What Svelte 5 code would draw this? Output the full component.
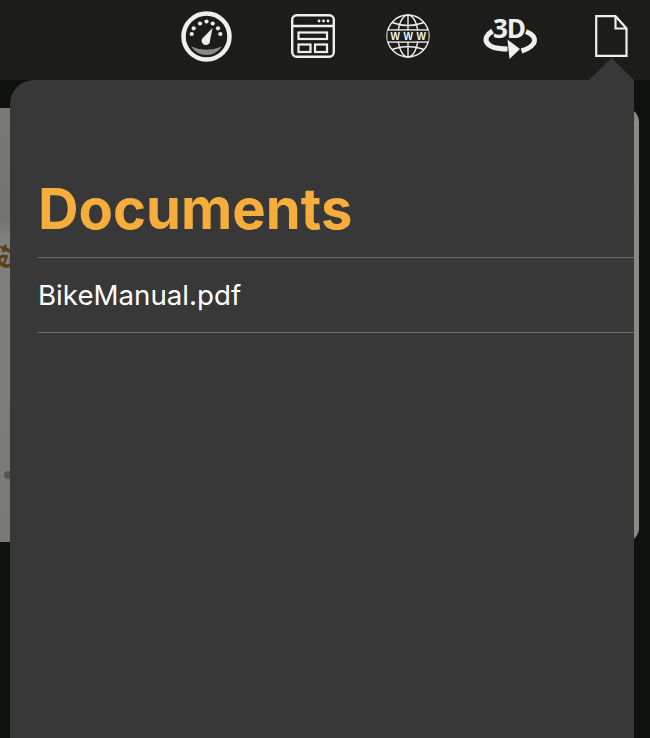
<script>
  const files = ['BikeManual.pdf'];
  // gauge tick dots, relative to the dial centre
  const dots = [[-14.8, -2.5], [-12.8, -8.2], [-6.5, -13], [0, -15], [6.2, -13], [11.5, -8.2], [13.8, -2.5]];
</script>

<div class="screen">
  <header class="toolbar">
    <svg class="icon" viewBox="0 0 52 52" width="52" height="52">
      <circle cx="26.500" cy="26.500" r="23" fill="none" stroke="#efefef" stroke-width="4.500" />
      <path d="M11 36.500 Q26.500 43 42 36.500 Q36 45 26.500 45 Q17 45 11 36.500Z" fill="#8a8a88" />
      {#each dots as [x, y]}
        <circle cx={26.5 + x} cy={26.5 + y} r="2.100" fill="#efefef" />
      {/each}
      <path d="M32.500 18 L30 30.500 A4.200 4.200 0 1 1 23.300 27.500Z" fill="#efefef" />
    </svg>

    <svg class="icon window" viewBox="0 0 44 44" width="44" height="44">
      <rect x="1.200" y="1.200" width="41.600" height="41.600" rx="4.500" fill="none" stroke="#efefef" stroke-width="2.400" />
      <path d="M2 12h40" stroke="#efefef" stroke-width="2.400" />
      <circle cx="28" cy="7" r="1.400" fill="#efefef" />
      <circle cx="32.500" cy="7" r="1.400" fill="#efefef" />
      <circle cx="37" cy="7" r="1.400" fill="#efefef" />
      <rect x="7.500" y="18.500" width="28.500" height="6.500" fill="none" stroke="#efefef" stroke-width="2.200" />
      <rect x="7.500" y="30.500" width="12" height="7.500" fill="none" stroke="#efefef" stroke-width="2.200" />
      <rect x="24" y="30.500" width="12" height="7.500" fill="none" stroke="#efefef" stroke-width="2.200" />
    </svg>

    <svg class="icon globe" viewBox="0 0 44 44" width="44" height="44">
      <g fill="none" stroke="#efefef" stroke-width="1.400">
        <circle cx="22" cy="22" r="21" />
        <ellipse cx="22" cy="22" rx="10" ry="21" />
        <path d="M22 1v15M22 28v15M6 8.500Q22 14.500 38 8.500M6 35.500Q22 29.500 38 35.500M1.500 16h41M1.500 28h41" />
      </g>
      <rect x="1.500" y="16.800" width="41" height="10.400" fill="#1c1d1b" />
      <text class="www" y="25.600" x="4.500 17.500 30.500">WWW</text>
    </svg>

    <svg class="icon rotate" viewBox="0 0 54 46" width="54" height="46">
      <text class="three-d" x="26" y="25" text-anchor="middle">3D</text>
      <path d="M9.500 18 C-2 25 1 36 24.500 36" fill="none" stroke="#efefef" stroke-width="5" />
      <path d="M24.500 26.500 L37 36 L26.500 46Z" fill="#efefef" />
      <path d="M43 18.500 C56 24 54 33 38.500 38" fill="none" stroke="#efefef" stroke-width="5" />
    </svg>

    <svg class="icon page" viewBox="0 0 33 42" width="33" height="42">
      <path d="M1.200 1.200H20.500L31.500 13.500V40.800H1.200Z" fill="none" stroke="#efefef" stroke-width="2.200" />
      <path d="M20.500 1.200V13.500H31.500" fill="none" stroke="#efefef" stroke-width="2.200" />
    </svg>
  </header>

  <main class="backdrop">
    <div class="photo">
      <span class="photo-text">et</span>
      <span class="photo-dot"></span>
    </div>
  </main>

  <section class="popover">
    <span class="arrow"></span>
    <h1>Documents</h1>
    <ul>
      {#each files as file}
        <li>{file}</li>
      {/each}
    </ul>
  </section>
</div>

<style>
  :global(body) {
    margin: 0;
    background: #0f110e;
  }

  .screen {
    position: relative;
    width: 650px;
    height: 738px;
    overflow: hidden;
    background: #0f110e;
    font-family: Inter, "Liberation Sans", sans-serif;
  }

  .toolbar {
    display: flex;
    align-items: center;
    height: 80px;
    padding: 0 0 8px 180px;
    box-sizing: border-box;
    background: #1c1d1b;
  }

  .icon {
    display: block;
    flex: none;
    overflow: visible;
  }

  .window {
    margin-left: 59px;
  }

  .globe {
    margin-left: 51px;
  }

  .rotate {
    margin-left: 53px;
  }

  .page {
    margin-left: 58px;
  }

  .www {
    font: 700 10px "Liberation Sans", sans-serif;
    fill: #f4f4f4;
  }

  .three-d {
    font: 700 26px "Open Sans", sans-serif;
    letter-spacing: -1px;
    fill: #efefef;
  }

  .backdrop {
    padding-top: 28px;
  }

  .photo {
    position: relative;
    width: 639px;
    height: 434px;
    border-radius: 0 14px 14px 0;
    overflow: hidden;
    background:
      linear-gradient(to right, transparent 98.8%, #8a8a86 99.4%),
      linear-gradient(to bottom, #7a7b76 0, #72736e 25%, #7f807b 30%, #797a75 100%);
  }

  .photo-text {
    position: absolute;
    left: -6px;
    top: 133px;
    color: #5f3f12;
    font: 700 26px "Liberation Sans", sans-serif;
    transform: rotate(-68deg);
  }

  .photo-dot {
    position: absolute;
    left: 4px;
    top: 363px;
    width: 8px;
    height: 8px;
    border-radius: 50%;
    background: #555;
  }

  .popover {
    position: absolute;
    left: 10px;
    top: 80px;
    width: 624px;
    height: 658px;
    padding: 98px 0 0 28px;
    box-sizing: border-box;
    border-radius: 24px 0 0 0;
    background: #383838;
  }

  .arrow {
    position: absolute;
    right: 0;
    top: -22px;
    width: 45px;
    height: 22px;
    background: #383838;
    clip-path: polygon(0 100%, 50% 0, 100% 100%);
  }

  h1 {
    margin: 0;
    color: #f5ae3c;
    font-size: 56.200px;
    font-weight: 700;
    line-height: 63px;
  }

  ul {
    margin: 16px 0 0;
    padding: 0;
    list-style: none;
    border-top: 1px solid #6d6d6d;
  }

  li {
    height: 74px;
    line-height: 74px;
    border-bottom: 1px solid #6d6d6d;
    color: #fff;
    font-size: 27.700px;
  }
</style>
